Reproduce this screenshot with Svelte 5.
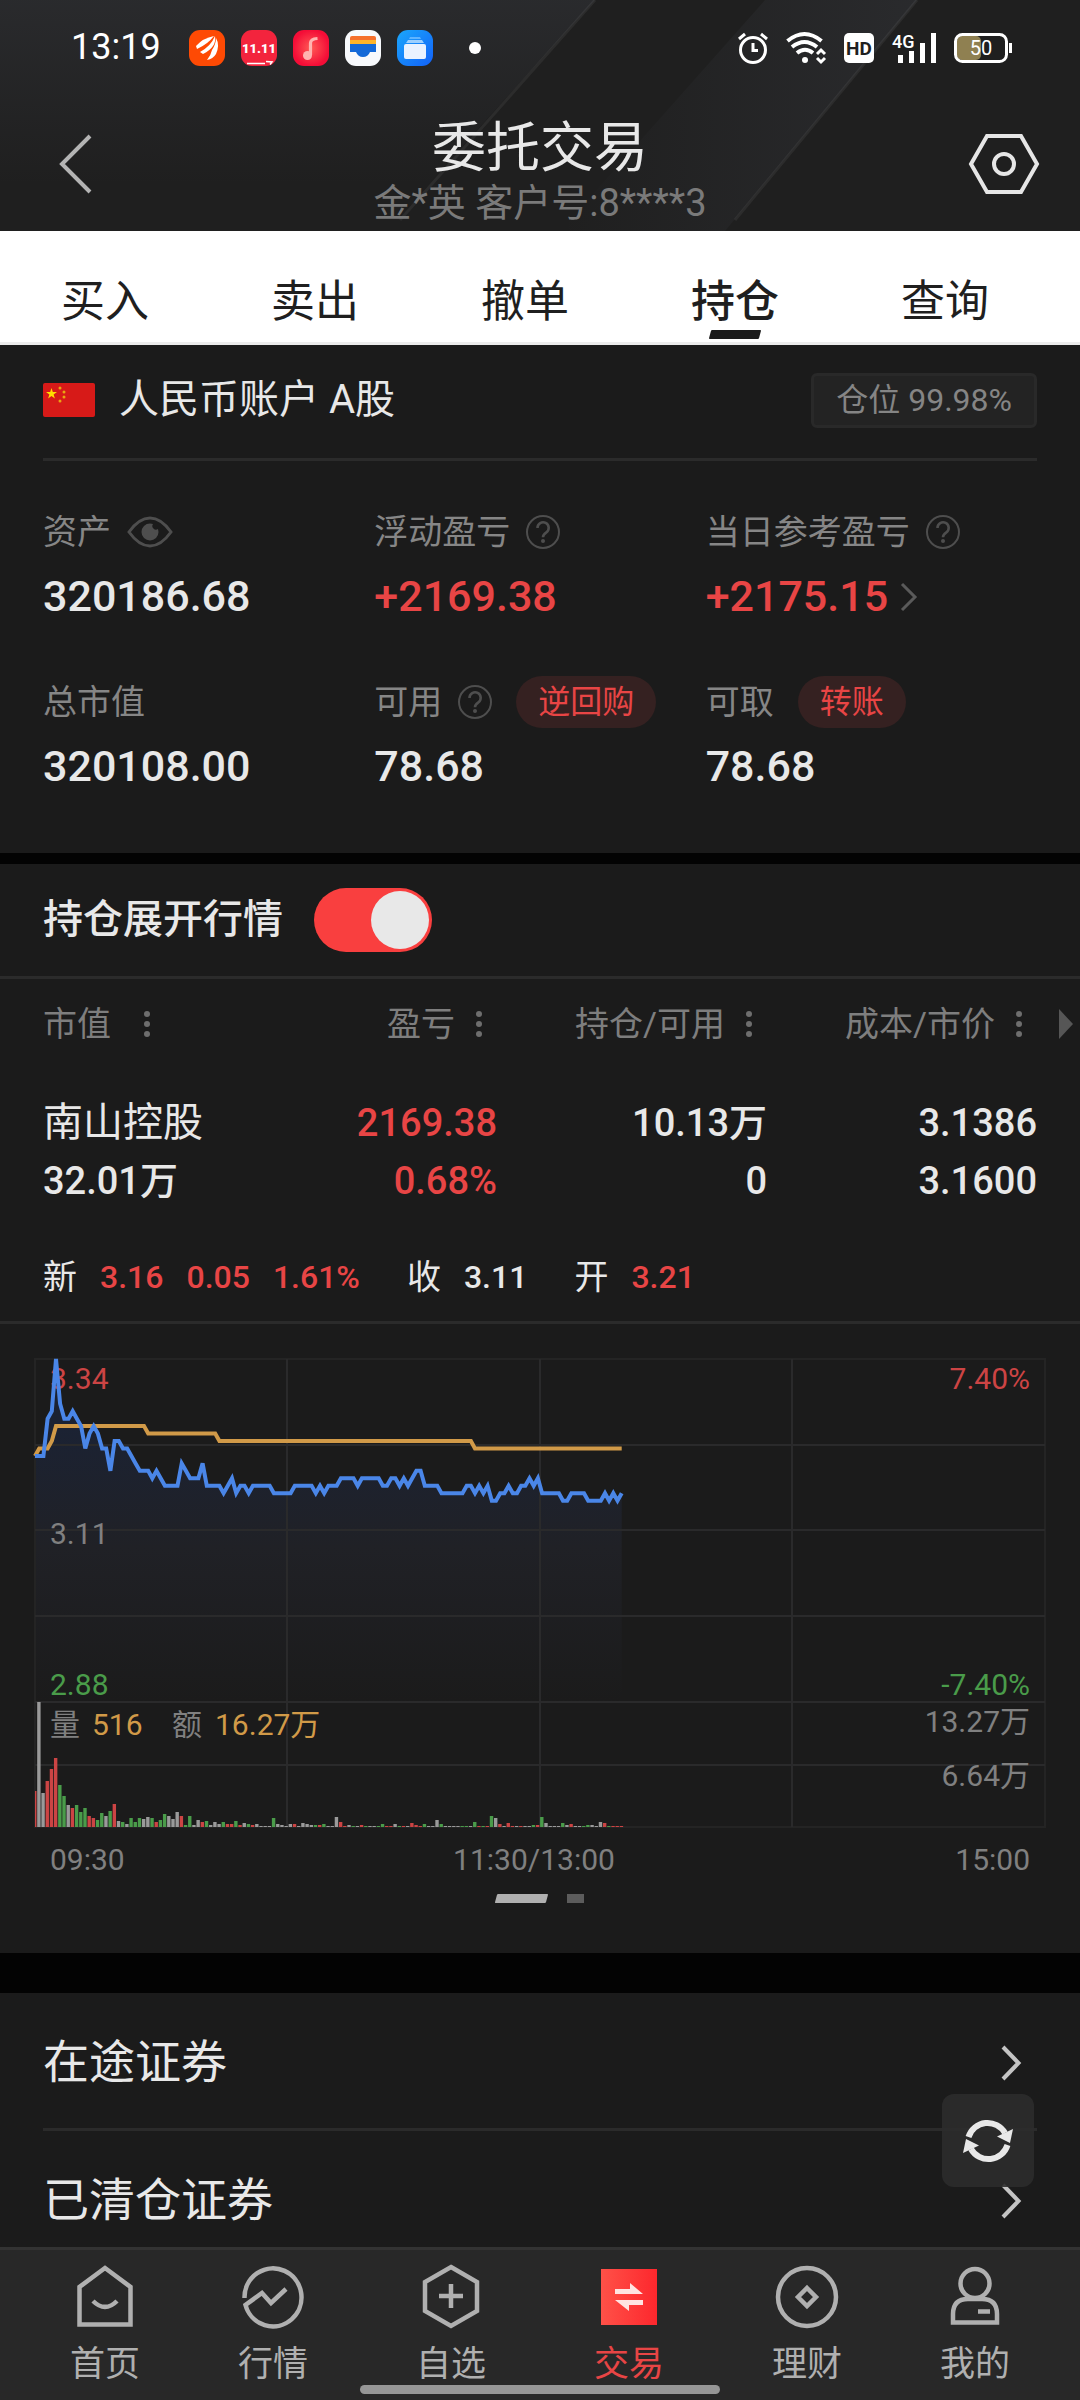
<script>
    let activeTab = '持仓';
    let activeNav = '交易';
    let expandQuote = true;

    const tabs = ['买入', '卖出', '撤单', '持仓', '查询'];

    const columns = ['市值', '盈亏', '持仓/可用', '成本/市价'];

    const navItems = [
        { label: '首页', icon: 'home' },
        { label: '行情', icon: 'market' },
        { label: '自选', icon: 'watch' },
        { label: '交易', icon: 'trade' },
        { label: '理财', icon: 'wealth' },
        { label: '我的', icon: 'mine' }
    ];

    // Chart geometry: one slot per minute of the trading day
    const W = 1010;
    const PRICE_H = 343;
    const VOL_BASE = 468;
    const STEP = W / 241;
    const priceY = (cents) => ((334 - cents) / 46) * PRICE_H;

    // Price runs as [cents, minutes]
    const priceRuns = [
        [321, 3], [326, 1], [327, 1], [334, 1], [328, 1], [326, 2], [327, 1], [326, 1], [325, 1], [322, 1],
        [324, 1], [325, 1], [324, 1], [322, 2], [319, 1], [323, 2], [322, 2], [321, 1], [320, 1], [319, 3],
        [318, 1], [319, 1], [318, 1], [317, 4], [320, 1], [319, 1], [318, 3], [320, 1], [317, 4], [316, 1],
        [317, 1], [318, 1], [316, 1], [317, 2], [316, 1], [317, 5], [316, 5], [317, 5], [316, 1], [317, 1],
        [316, 1], [317, 3], [318, 4], [317, 1], [318, 5], [317, 2], [318, 2], [317, 1], [318, 1], [317, 1],
        [318, 1], [319, 2], [317, 4], [316, 6], [317, 2], [316, 1], [317, 1], [316, 1], [317, 1], [315, 2],
        [316, 2], [317, 1], [316, 2], [317, 2], [318, 1], [317, 1], [318, 1], [316, 5], [315, 2], [316, 4],
        [315, 4], [316, 1], [315, 1], [316, 1], [315, 1], [316, 1]
    ];
    const averageRuns = [[321, 1], [322, 3], [323, 1], [325, 22], [324, 17], [323, 61], [322, 36]];

    const toPoints = (runs) =>
        runs
            .flatMap(([cents, minutes]) => Array(minutes).fill(cents))
            .map((cents, i) => `${(i * STEP).toFixed(1)},${priceY(cents).toFixed(1)}`);

    const pricePoints = toPoints(priceRuns);
    const averagePoints = toPoints(averageRuns);
    const lastX = (pricePoints.length - 1) * STEP;

    // r = up, g = down, w = flat; the number is the bar height
    const volumes = (
        'r36 w125 w34 r46 r58 r69 g42 g31 w22 r19 g22 g15 g19 r11 r9 g7 g14 w11 g16 r23 w6 g5 w3 g9 g5 g9 w8 w10 g9 r5 ' +
        'g7 g13 w11 w8 w15 r11 g2 g11 w2 w7 r5 g6 w2 w5 w3 g5 r3 r3 g6 r2 w4 g3 r2 w3 w1 w1 w1 g9 w3 w2 ' +
        'w1 w3 r3 w1 w4 w3 w2 g2 r2 g3 w1 w1 w10 r5 r1 w2 g1 w1 r2 g1 w1 w1 g1 g3 r1 r1 w3 g1 r1 w1 ' +
        'r4 r2 r1 g3 w1 w1 w7 g3 w1 w1 w1 w1 g1 g1 w1 g5 r1 g1 r1 g11 w9 r3 w1 r4 r1 w1 r1 w1 w1 g2 ' +
        'r2 g10 w4 w1 w1 w1 g4 w2 r3 w1 w1 g1 g2 w2 w1 w5 r4 g1 r1 r1 r1'
    )
        .split(' ')
        .map((v) => ({ kind: v[0], height: Number(v.slice(1)) }));

    const gridX = [252, 505, 757];
    const gridY = [86, 171, 257, 343, 406];
</script>

{#snippet help()}
    <button class="icon-btn" aria-label="说明">
        <svg width="34" height="34" viewBox="0 0 34 34" fill="none" stroke="#4e4e4e">
            <circle cx="17" cy="17" r="16" stroke-width="2" />
            <path d="M11.5 13a5.6 5.6 0 1 1 8.6 4.6c-2 1.3-3.1 2.2-3.1 4.6" stroke-width="2.6" />
            <circle cx="17" cy="26" r="2" fill="#4e4e4e" stroke="none" />
        </svg>
    </button>
{/snippet}

{#snippet arrow()}
    <svg width="20" height="36" viewBox="0 0 20 36" fill="none" stroke="#c4c4c4" stroke-width="4">
        <path d="M2 2l15.5 16L2 34" />
    </svg>
{/snippet}

<div class="app">
    <header>
        <svg class="backdrop" viewBox="0 0 1080 231" preserveAspectRatio="none" aria-hidden="true">
            <defs>
                <linearGradient id="sheen" x1="0" y1="0" x2="0" y2="1">
                    <stop offset="0" stop-color="#8890a8" stop-opacity="0.1" />
                    <stop offset="0.8" stop-color="#8890a8" stop-opacity="0" />
                </linearGradient>
                <linearGradient id="beam">
                    <stop offset="0" stop-color="#8890a8" stop-opacity="0" />
                    <stop offset="1" stop-color="#8890a8" stop-opacity="0.1" />
                </linearGradient>
            </defs>
            <path d="M0 0H595L385 231H0z" fill="url(#sheen)" />
            <path d="M765 0H917L725 231H560z" fill="url(#beam)" />
            <path d="M595 0L400 220M917 0L735 220" stroke="#fff" stroke-opacity="0.06" stroke-width="3" />
        </svg>

        <div class="status">
            <span class="time">13:19</span>
            <div class="apps">
                <svg width="36" height="36" viewBox="0 0 36 36">
                    <rect width="36" height="36" rx="11" fill="#fe4a04" />
                    <path d="M7 16Q14 8 25 6Q19 14 8 19z" fill="#fff" />
                    <path d="M11 22Q22 16 26 6Q28 17 14 24z" fill="#fff" />
                    <path d="M23 20Q27 14 27 8Q31 15 27 24Q24 29 18 30Q22 25 23 20z" fill="#fff" />
                </svg>
                <svg width="36" height="36" viewBox="0 0 36 36">
                    <rect width="36" height="36" rx="11" fill="#f3243d" />
                    <text x="18" y="23" text-anchor="middle" font-size="13" font-weight="900" fill="#fff">11.11</text>
                    <path d="M6 33.5h18M25 31.5l6 .5-2 2.5" stroke="#fff" stroke-width="1.5" fill="none" />
                </svg>
                <svg width="36" height="36" viewBox="0 0 36 36">
                    <defs>
                        <radialGradient id="music">
                            <stop offset="0" stop-color="#ff5a55" />
                            <stop offset="1" stop-color="#f40d37" />
                        </radialGradient>
                    </defs>
                    <rect width="36" height="36" rx="11" fill="url(#music)" />
                    <circle cx="14.5" cy="25.5" r="4.5" fill="#ffb3b0" />
                    <path d="M17.5 25V13q0-4 7-4.5" stroke="#ffb3b0" stroke-width="3.2" fill="none" />
                </svg>
                <svg width="36" height="36" viewBox="0 0 36 36">
                    <rect width="36" height="36" rx="11" fill="#f7f9fc" />
                    <path d="M5 8q0-2 2-2h22q2 0 2 2v4H5z" fill="#f5702c" />
                    <path d="M5 10h26v5H5z" fill="#fdb52a" />
                    <path d="M5 14h26v8h-6q-2 5-7 5t-7-5H5z" fill="#1369d8" />
                </svg>
                <svg width="36" height="36" viewBox="0 0 36 36">
                    <defs>
                        <linearGradient id="files" x1="0" y1="0" x2="1" y2="1">
                            <stop offset="0" stop-color="#1ba7fc" />
                            <stop offset="1" stop-color="#1261f8" />
                        </linearGradient>
                    </defs>
                    <rect width="36" height="36" rx="11" fill="url(#files)" />
                    <path d="M13 7h10l1 2H12z" fill="#5fb4ff" />
                    <path d="M11 10h14l2 3H9z" fill="#9dd0ff" />
                    <rect x="7" y="14" width="22" height="15" rx="2" fill="#eaf2ff" />
                </svg>
            </div>
            <span class="dot"></span>

            <div class="signals">
                <svg width="30" height="32" viewBox="0 0 30 32" fill="none" stroke="#fff">
                    <circle cx="15" cy="18" r="12.5" stroke-width="3" />
                    <path d="M15 11v7.5h5" stroke-width="3" />
                    <path d="M1 7l6-5M29 7l-6-5" stroke-width="3" />
                </svg>
                <svg width="40" height="32" viewBox="0 0 40 32" fill="none" stroke="#fff">
                    <path d="M1.5 9q17-14 34 0M6 15q12.500-10 25 0M11 21q8-6.500 16 0" stroke-width="4" />
                    <circle cx="19" cy="28" r="3" fill="#fff" stroke="none" />
                    <path d="M31 22l4-4 4 4M31 26l4 4 4-4" stroke-width="3" />
                </svg>
                <svg width="30" height="32" viewBox="0 0 30 32">
                    <rect y="1" width="30" height="30" rx="5" fill="#fff" />
                    <text x="15" y="23" text-anchor="middle" font-size="19" font-weight="700" fill="#1f1f1f">HD</text>
                </svg>
                <svg width="44" height="32" viewBox="0 0 44 32">
                    <text x="0" y="16" font-size="18" font-weight="500" fill="#fff">4G</text>
                    <path d="M8.5 31v-8M19.5 31V19M30.5 31V11M41.5 31V1" stroke="#fff" stroke-width="5" />
                </svg>
                <svg width="58" height="32" viewBox="0 0 58 32">
                    <rect x="3" y="4" width="24" height="24" rx="5" fill="#8f8051" />
                    <rect x="1.5" y="2.5" width="51" height="27" rx="7" fill="none" stroke="#fff" stroke-width="3" />
                    <path d="M56.5 11v10" stroke="#fff" stroke-width="3" />
                    <text x="27" y="23" text-anchor="middle" font-size="20" fill="#fff">50</text>
                </svg>
            </div>
        </div>

        <div class="title-bar">
            <button class="icon-btn back" aria-label="返回">
                <svg width="34" height="60" viewBox="0 0 34 60" fill="none" stroke="#b4b4b4" stroke-width="4">
                    <path d="M31 2L3 30l28 28" />
                </svg>
            </button>
            <div class="titles">
                <h1>委托交易</h1>
                <p>金*英 客户号:8****3</p>
            </div>
            <button class="icon-btn" aria-label="设置">
                <svg width="70" height="60" viewBox="0 0 70 60" fill="none" stroke="#e6e6e6" stroke-width="4">
                    <path d="M18 2h34l16 28-16 28H18L2 30z" />
                    <circle cx="35" cy="30" r="10" />
                </svg>
            </button>
        </div>
    </header>

    <nav class="tabs">
        {#each tabs as tab}
            <button class:active={tab === activeTab} onclick={() => (activeTab = tab)}>{tab}</button>
        {/each}
    </nav>

    <main>
        <section class="account">
            <div class="account-head">
                <svg width="52" height="34" viewBox="0 0 52 34">
                    <rect width="52" height="34" rx="2" fill="#d71a18" />
                    <path d="M8.5 5l1.3 4h4.2l-3.4 2.5 1.3 4-3.4-2.5-3.4 2.5 1.3-4L3 9h4.2z" fill="#ffde00" />
                    <g fill="#e9a512">
                        <circle cx="17" cy="5" r="1.5" />
                        <circle cx="21" cy="9" r="1.5" />
                        <circle cx="21" cy="14" r="1.5" />
                        <circle cx="17" cy="18" r="1.5" />
                    </g>
                </svg>
                <h2>人民币账户 A股</h2>
                <button class="position">仓位 99.98%</button>
            </div>

            <dl class="assets">
                <div>
                    <dt>
                        资产
                        <button class="icon-btn" aria-label="隐藏资产">
                            <svg width="46" height="34" viewBox="0 0 46 34">
                                <path d="M2 17Q12 3 23 3t21 14Q34 31 23 31T2 17z" fill="none" stroke="#4e4e4e" stroke-width="3" />
                                <path d="M23 8.5a8.5 8.5 0 1 0 8.5 8.5l-.5-3a3.6 3.6 0 0 1-5-5z" fill="#4e4e4e" />
                            </svg>
                        </button>
                    </dt>
                    <dd>320186.68</dd>
                </div>
                <div>
                    <dt>浮动盈亏 {@render help()}</dt>
                    <dd class="up">+2169.38</dd>
                </div>
                <div>
                    <dt>当日参考盈亏 {@render help()}</dt>
                    <dd class="up">
                        +2175.15
                        <svg width="18" height="32" viewBox="0 0 18 32" fill="none" stroke="#5a5a5a" stroke-width="3">
                            <path d="M2 3l13 13L2 29" />
                        </svg>
                    </dd>
                </div>
                <div>
                    <dt>总市值</dt>
                    <dd>320108.00</dd>
                </div>
                <div>
                    <dt>可用 {@render help()} <button class="pill">逆回购</button></dt>
                    <dd>78.68</dd>
                </div>
                <div>
                    <dt>可取 <button class="pill">转账</button></dt>
                    <dd>78.68</dd>
                </div>
            </dl>
        </section>

        <section class="holdings">
            <label class="expand">
                持仓展开行情
                <input type="checkbox" bind:checked={expandQuote} />
            </label>

            <div class="table-wrap">
                <table>
                    <thead>
                        <tr>
                            {#each columns as column}
                                <th>
                                    <button>
                                        {column}
                                        <svg width="8" height="30" viewBox="0 0 8 30" fill="#6e6e6e">
                                            <circle cx="4" cy="5" r="3" />
                                            <circle cx="4" cy="15" r="3" />
                                            <circle cx="4" cy="25" r="3" />
                                        </svg>
                                    </button>
                                </th>
                            {/each}
                        </tr>
                    </thead>
                    <tbody>
                        <tr>
                            <td><span class="name">南山控股</span><br />32.01万</td>
                            <td class="up">2169.38<br />0.68%</td>
                            <td>10.13万<br />0</td>
                            <td>3.1386<br />3.1600</td>
                        </tr>
                    </tbody>
                </table>
                <svg class="more" width="14" height="30" viewBox="0 0 14 30" fill="#565656">
                    <path d="M0 0l14 15L0 30z" />
                </svg>
            </div>

            {#if expandQuote}
                <div class="quote">
                    <p>新 <b class="up">3.16</b> <b class="up">0.05</b> <b class="up">1.61%</b></p>
                    <p>收 <b>3.11</b></p>
                    <p>开 <b class="up">3.21</b></p>
                </div>

                <div class="chart">
                    <svg viewBox="0 0 1010 521" role="img" aria-label="分时图">
                        <defs>
                            <linearGradient id="area" x1="0" y1="0" x2="0" y2="343" gradientUnits="userSpaceOnUse">
                                <stop offset="0.2" stop-color="#1b2233" />
                                <stop offset="0.55" stop-color="#202126" />
                                <stop offset="1" stop-color="#1b1b1b" />
                            </linearGradient>
                        </defs>
                        <polygon points={`0,${PRICE_H} ${pricePoints.join(' ')} ${lastX},${PRICE_H}`} fill="url(#area)" />
                        <rect width={W} height={VOL_BASE} fill="none" stroke="#242424" stroke-width="2" />
                        <g stroke="#2a2a2b" stroke-width="2">
                            {#each gridX as x}
                                <line x1={x} x2={x} y1="0" y2={VOL_BASE} />
                            {/each}
                            {#each gridY as y}
                                <line x1="0" x2={W} y1={y} y2={y} />
                            {/each}
                        </g>

                        {#each volumes as bar, i}
                            <rect
                                class={bar.kind}
                                x={Math.max(0, i * STEP - 2)}
                                y={VOL_BASE - bar.height}
                                width={i ? 3.4 : 1.5}
                                height={bar.height}
                            />
                        {/each}

                        <g class="labels">
                            <text class="r" x="15" y="30">3.34</text>
                            <text x="15" y="185">3.11</text>
                            <text class="g" x="15" y="336">2.88</text>
                            <text x="15" y="376">量</text>
                            <text class="o" x="57" y="376">516</text>
                            <text x="137" y="376">额</text>
                            <text class="o" x="180" y="376">16.27万</text>
                            <text x="15" y="511">09:30</text>
                            <text x="499" y="511" text-anchor="middle">11:30/13:00</text>
                            <g text-anchor="end">
                                <text class="r" x="995" y="30">7.40%</text>
                                <text class="g" x="995" y="336">-7.40%</text>
                                <text x="995" y="373">13.27万</text>
                                <text x="995" y="427">6.64万</text>
                                <text x="995" y="511">15:00</text>
                            </g>
                        </g>

                        <g fill="none" stroke-width="4">
                            <polyline points={averagePoints.join(' ')} stroke="#d19a48" />
                            <polyline points={pricePoints.join(' ')} stroke="#4a86e8" />
                        </g>
                    </svg>
                    <div class="pager"><span class="on"></span><span></span></div>
                </div>
            {/if}
        </section>

        <section class="links">
            <a href="#transit">在途证券 {@render arrow()}</a>
            <a href="#cleared">已清仓证券 {@render arrow()}</a>
            <button class="refresh" aria-label="刷新">
                <svg width="52" height="52" viewBox="0 0 52 52" fill="none" stroke="#e8e8e8" stroke-width="6">
                    <path d="M6.5 22A20 20 0 0 1 43 18" />
                    <path d="M45.5 30A20 20 0 0 1 9 34" />
                    <path d="M51 14l-3 14-13-6.5z" fill="#e8e8e8" stroke="none" />
                    <path d="M1 38l3-14 13 6.5z" fill="#e8e8e8" stroke="none" />
                </svg>
            </button>
        </section>
    </main>

    <nav class="bottom">
        {#each navItems as item}
            <button class:active={item.label === activeNav} onclick={() => (activeNav = item.label)}>
                <svg width="66" height="66" viewBox="0 0 66 66" fill="none" stroke="#b0b0b0" stroke-width="4.5">
                    {#if item.icon === 'home'}
                        <path d="M7.5 60.5V23L33 4l25.5 19v37.5z" />
                        <path d="M21 37q12 12 24 0" />
                    {:else if item.icon === 'market'}
                        <path d="M4.5 34A28.5 29 0 1 1 5.5 41L22 29l9 10 15-14" />
                    {:else if item.icon === 'watch'}
                        <path d="M33 3l26 15v29L33 62 7 47V18zM33 20v24M21 32h24" />
                    {:else if item.icon === 'trade'}
                        <defs>
                            <linearGradient id="trade">
                                <stop offset="0" stop-color="#ff5148" />
                                <stop offset="1" stop-color="#fd272d" />
                            </linearGradient>
                        </defs>
                        <rect x="5" y="5" width="56" height="56" fill="url(#trade)" stroke="none" />
                        <path d="M19 25h15v-6l13 11H19zM47 41H33v6L19 36h28z" fill="#ffe4e2" stroke="none" />
                    {:else if item.icon === 'wealth'}
                        <circle cx="33" cy="33" r="29" />
                        <path d="M33 24l9 9-9 9-9-9z" />
                    {:else}
                        <circle cx="33" cy="19.5" r="14.5" />
                        <path d="M11 58.5V50q0-15 15-15h14q15 0 15 15v8.5zM36 47.5h12" />
                    {/if}
                </svg>
                {item.label}
            </button>
        {/each}
        <span class="home-bar"></span>
    </nav>
</div>

<style>
    :global(body) {
        margin: 0;
        background: #1b1b1b;
    }

    .app {
        display: flex;
        flex-direction: column;
        height: 100vh;
        overflow: hidden;
        background: #1b1b1b;
        color: #e8e8e8;
        font-family: Roboto, "Noto Sans CJK SC", sans-serif;
        line-height: 1.2;
    }

    button {
        padding: 0;
        border: none;
        background: none;
        color: inherit;
        font: inherit;
        cursor: pointer;
    }

    svg {
        display: block;
        flex: none;
        overflow: visible;
    }

    h1,
    h2,
    p,
    dl,
    dd {
        margin: 0;
        font-weight: 400;
    }

    .icon-btn {
        display: flex;
    }

    .up {
        color: #e84545;
    }

    /* Header */
    header {
        position: relative;
        flex: none;
        overflow: hidden;
        background: #1f1f1f;
    }

    .backdrop {
        position: absolute;
        inset: 0;
        width: 100%;
        height: 100%;
    }

    .status {
        position: relative;
        display: flex;
        align-items: center;
        height: 96px;
        padding: 0 68px 0 71px;
        color: #fff;
    }

    .time {
        font-size: 36px;
    }

    .apps {
        display: flex;
        gap: 16px;
        margin-left: 28px;
    }

    .dot {
        width: 12px;
        height: 12px;
        margin-left: 36px;
        border-radius: 50%;
        background: #fff;
    }

    .signals {
        display: flex;
        gap: 18px;
        margin-left: auto;
    }

    .title-bar {
        position: relative;
        display: flex;
        align-items: center;
        justify-content: space-between;
        height: 135px;
        padding: 0 41px;
    }

    .title-bar .icon-btn {
        width: 70px;
    }

    .title-bar .back {
        justify-content: center;
    }

    .titles {
        padding-top: 14px;
        text-align: center;
    }

    h1 {
        font-size: 54px;
        line-height: 64px;
    }

    .titles p {
        color: #7a7a7a;
        font-size: 38px;
        line-height: 44px;
    }

    /* Trade tabs */
    .tabs {
        display: flex;
        flex: none;
        height: 111px;
        padding-right: 30px;
        border-bottom: 3px solid #ececec;
        background: #fff;
        color: #1f1f1f;
    }

    .tabs button {
        position: relative;
        flex: 1;
        padding-top: 32px;
        font-size: 44px;
    }

    .tabs .active {
        font-weight: 500;
    }

    .tabs .active::after {
        content: "";
        position: absolute;
        bottom: 3px;
        left: 50%;
        width: 50px;
        height: 9px;
        border-radius: 1px;
        background: #1b1b1b;
        transform: translateX(-50%) skewX(-15deg);
    }

    main {
        flex: 1;
        min-height: 0;
        overflow: hidden;
    }

    /* Account summary */
    .account {
        padding: 0 43px 60px;
        border-bottom: 11px solid #030303;
    }

    .account-head {
        display: flex;
        align-items: center;
        height: 110px;
        padding-bottom: 3px;
        border-bottom: 3px solid #2b2b2b;
    }

    h2 {
        margin-left: 24px;
        font-size: 40px;
    }

    .position {
        height: 55px;
        margin-left: auto;
        padding: 0 22px;
        border: 3px solid #292929;
        border-radius: 6px;
        background: #232323;
        color: #858585;
        font-size: 32px;
    }

    .assets {
        display: grid;
        grid-template-columns: repeat(3, 1fr);
        row-gap: 53px;
        padding-top: 45px;
    }

    dt {
        display: flex;
        align-items: center;
        gap: 16px;
        height: 52px;
        color: #868686;
        font-size: 34px;
        white-space: nowrap;
    }

    dd {
        display: flex;
        align-items: center;
        gap: 12px;
        height: 52px;
        margin-top: 13px;
        font-size: 43px;
        font-weight: 500;
    }

    .pill {
        height: 52px;
        margin-left: 8px;
        padding: 0 22px;
        border-radius: 26px;
        background: #352121;
        color: #e84545;
        font-size: 32px;
    }

    /* Holdings */
    .holdings {
        border-bottom: 40px solid #030303;
    }

    .expand {
        display: flex;
        align-items: center;
        gap: 31px;
        height: 112px;
        padding-left: 43px;
        border-bottom: 3px solid #2b2b2b;
        font-size: 40px;
        font-weight: 500;
    }

    .expand input {
        appearance: none;
        width: 118px;
        height: 64px;
        margin: 0;
        padding: 3px;
        border-radius: 32px;
        background: #4a4a4a;
    }

    .expand input::before {
        content: "";
        display: block;
        width: 58px;
        height: 58px;
        border-radius: 50%;
        background: #e8e8e8;
    }

    .expand input:checked {
        background: #f93f3f;
    }

    .expand input:checked::before {
        margin-left: auto;
    }

    .table-wrap {
        position: relative;
        padding: 0 43px;
    }

    table {
        width: 100%;
        border-collapse: collapse;
        table-layout: fixed;
    }

    th {
        height: 90px;
        padding: 0;
        color: #7e7e7e;
        font-size: 34px;
        font-weight: 400;
        text-align: right;
        white-space: nowrap;
    }

    th button {
        display: inline-flex;
        align-items: center;
        gap: 20px;
        margin-right: 14px;
    }

    th:first-child {
        width: 184px;
        text-align: left;
    }

    th:first-child button {
        gap: 32px;
    }

    td {
        padding: 25px 0 23px;
        font-size: 38px;
        font-weight: 500;
        line-height: 58px;
        text-align: right;
        white-space: nowrap;
    }

    td:first-child {
        text-align: left;
    }

    .name {
        font-size: 40px;
        font-weight: 400;
    }

    .more {
        position: absolute;
        top: 30px;
        right: 7px;
    }

    .quote {
        display: flex;
        align-items: center;
        gap: 47px;
        height: 88px;
        padding-left: 43px;
        border-bottom: 3px solid #2b2b2b;
        font-size: 34px;
    }

    .quote p {
        display: flex;
        align-items: center;
        gap: 23px;
    }

    .quote b {
        font-size: 32px;
        font-weight: 500;
    }

    .chart {
        padding: 35px 35px 50px;
    }

    .chart svg {
        width: 100%;
    }

    .labels {
        fill: #808080;
        font-size: 30px;
    }

    .r {
        fill: #cc4444;
    }

    .g {
        fill: #4a9c4a;
    }

    .w {
        fill: #9a9a9a;
    }

    .o {
        fill: #d19a48;
    }

    .pager {
        display: flex;
        justify-content: center;
        gap: 20px;
        margin-top: 14px;
    }

    .pager span {
        width: 17px;
        height: 9px;
        background: #5c5c5c;
    }

    .pager .on {
        width: 51px;
        border-radius: 1px;
        background: #b0b0b0;
        transform: skewX(-15deg);
    }

    /* Links below the holdings */
    .links {
        position: relative;
        padding: 0 43px;
    }

    .links a {
        display: flex;
        align-items: center;
        justify-content: space-between;
        height: 131px;
        padding-top: 4px;
        padding-right: 16px;
        border-bottom: 3px solid #2b2b2b;
        color: inherit;
        font-size: 46px;
        text-decoration: none;
    }

    .refresh {
        position: absolute;
        top: 101px;
        right: 46px;
        display: flex;
        align-items: center;
        justify-content: center;
        width: 92px;
        height: 93px;
        border-radius: 12px;
        background: rgba(44, 44, 44, 0.9);
    }

    /* Bottom navigation */
    .bottom {
        position: relative;
        display: grid;
        flex: none;
        grid-template-columns: 158fr repeat(4, 178fr) 158fr;
        height: 150px;
        padding: 0 26px;
        border-top: 3px solid #333;
        background: #282828;
        color: #b0b0b0;
    }

    .bottom button {
        display: flex;
        flex-direction: column;
        align-items: center;
        gap: 12px;
        padding-top: 14px;
        font-size: 35px;
        line-height: 46px;
    }

    .bottom .active {
        color: #e84545;
    }

    .home-bar {
        position: absolute;
        bottom: 6px;
        left: 50%;
        width: 360px;
        height: 9px;
        border-radius: 5px;
        background: #969696;
        transform: translateX(-50%);
    }
</style>
